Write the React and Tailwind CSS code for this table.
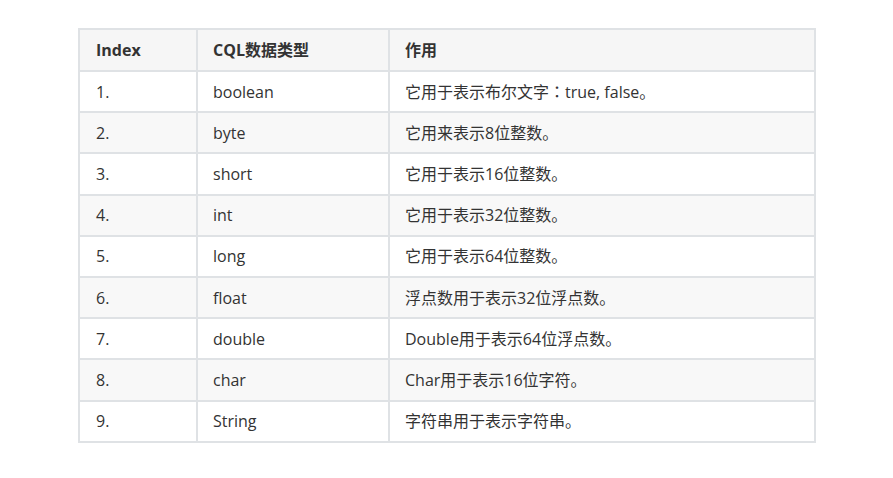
const rows = [
  ['1.', 'boolean', <>它用于表示布尔文字<span className="font-['Noto_Sans_CJK_TC',sans-serif]">：</span>true, false。</>],
  ['2.', 'byte', '它用来表示8位整数。'],
  ['3.', 'short', '它用于表示16位整数。'],
  ['4.', 'int', '它用于表示32位整数。'],
  ['5.', 'long', '它用于表示64位整数。'],
  ['6.', 'float', '浮点数用于表示32位浮点数。'],
  ['7.', 'double', 'Double用于表示64位浮点数。'],
  ['8.', 'char', 'Char用于表示16位字符。'],
  ['9.', 'String', '字符串用于表示字符串。'],
];

export default function App() {
  return (
    <div className="w-[893px] h-[478px] bg-white pt-[28px] pl-[78px] font-['Open_Sans','Noto_Sans_CJK_SC',sans-serif] text-[16px] text-[#333]">
      <table className="border-collapse w-[738px] table-fixed">
        <colgroup>
          <col className="w-[118px]" />
          <col className="w-[192px]" />
          <col />
        </colgroup>
        <thead>
          <tr className="h-[42px] bg-[#f6f6f6]">
            <th className="border-2 border-[#dfe2e5] text-left font-bold pl-[16px] py-0">Index</th>
            <th className="border-2 border-[#dfe2e5] text-left font-bold pl-[15px] py-0">CQL数据类型</th>
            <th className="border-2 border-[#dfe2e5] text-left font-bold pl-[15px] py-0">作用</th>
          </tr>
        </thead>
        <tbody>
          {rows.map((r, i) => (
            <tr key={i} className={i % 2 === 1 ? 'h-[41.2px] bg-[#f8f8f8]' : 'h-[41.2px] bg-white'}>
              {r.map((c, j) => (
                <td key={j} className={j === 0 ? 'border-2 border-[#dfe2e5] pl-[16px] py-0' : 'border-2 border-[#dfe2e5] pl-[15px] py-0'}>{c}</td>
              ))}
            </tr>
          ))}
        </tbody>
      </table>
    </div>
  );
}
